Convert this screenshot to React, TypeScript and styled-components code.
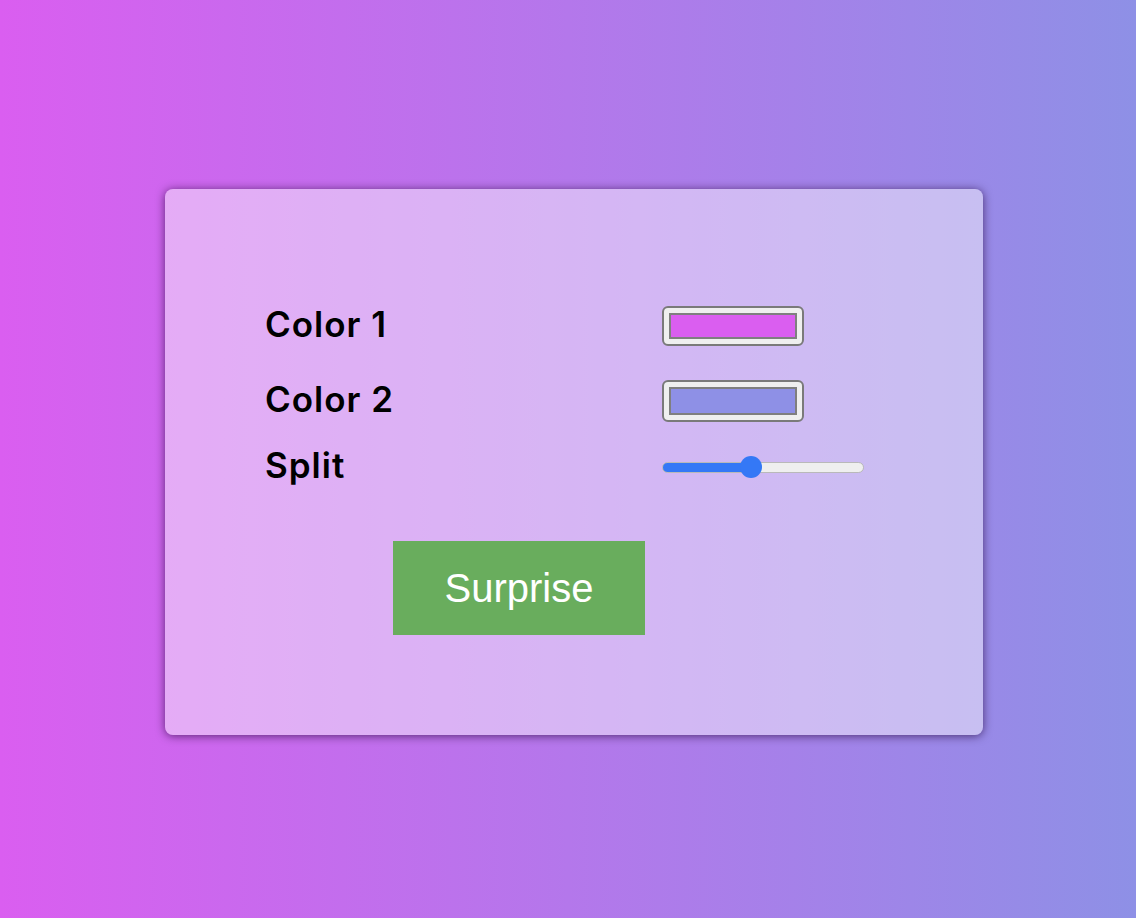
import React, { useState } from "react";
import styled, { createGlobalStyle } from "styled-components";

const GlobalStyle = createGlobalStyle`
  html, body {
    margin: 0;
    padding: 0;
  }
  body {
    font-family: "Inter", "Liberation Sans", sans-serif;
  }
`;

const Page = styled.div<{ $c1: string; $c2: string }>`
  box-sizing: border-box;
  width: 100vw;
  height: 100vh;
  padding: 189px 0 0 165px;
  background: linear-gradient(to right, ${(p) => p.$c1}, ${(p) => p.$c2});
  overflow: hidden;
`;

const Card = styled.div`
  box-sizing: border-box;
  width: 818px;
  height: 546px;
  padding: 117px 0 0 100px;
  border-radius: 8px;
  background: rgba(255, 255, 255, 0.46);
  box-shadow: 0 1px 10px rgba(30, 0, 50, 0.65);
`;

const Form = styled.div`
  display: grid;
  grid-template-columns: 397px auto;
  grid-template-rows: 40px 42px 22px;
  row-gap: 34px;
  align-items: center;
`;

const Label = styled.label`
  font-family: "Inter", sans-serif;
  font-size: 35px;
  line-height: 40px;
  font-weight: 600;
  color: #000;
  letter-spacing: 1px;
  padding-bottom: 5px;
`;

const ColorInput = styled.input<{ $h?: number }>`
  -webkit-appearance: none;
  appearance: none;
  box-sizing: border-box;
  width: 142px;
  height: ${(p) => p.$h ?? 40}px;
  margin: 0;
  padding: 5px;
  border: 2px solid #7a7a7a;
  border-radius: 6px;
  background: #efefef;
  cursor: pointer;

  &::-webkit-color-swatch-wrapper {
    padding: 0;
  }
  &::-webkit-color-swatch {
    border: 2px solid #7f7f7f;
    border-radius: 0;
  }
`;

const Slider = styled.input<{ $pct: number }>`
  -webkit-appearance: none;
  appearance: none;
  width: 202px;
  height: 22px;
  margin: 0;
  background: transparent;
  cursor: pointer;

  &::-webkit-slider-runnable-track {
    box-sizing: border-box;
    height: 11px;
    border-radius: 6px;
    border: 1px solid #b9b9b9;
    background: linear-gradient(
      to right,
      #3478f6 0,
      #3478f6 ${(p) => p.$pct}%,
      #efefef ${(p) => p.$pct}%,
      #efefef 100%
    );
  }
  &::-webkit-slider-thumb {
    -webkit-appearance: none;
    appearance: none;
    width: 22px;
    height: 22px;
    margin-top: -6.5px;
    border-radius: 50%;
    background: #3478f6;
    border: none;
  }
`;

const Button = styled.button`
  display: block;
  width: 252px;
  height: 94px;
  margin: 63px 0 0 128px;
  border: none;
  background: #69ad5d;
  color: #fff;
  font-family: "Liberation Sans", Arial, sans-serif;
  font-size: 40px;
  cursor: pointer;
`;

export default function App() {
  const [c1, setC1] = useState("#da5ef0");
  const [c2, setC2] = useState("#8e90e6");
  const [split, setSplit] = useState(43);

  const surprise = () => {
    const rnd = () =>
      "#" + Math.floor(Math.random() * 0xffffff).toString(16).padStart(6, "0");
    setC1(rnd());
    setC2(rnd());
    setSplit(Math.floor(Math.random() * 100));
  };

  return (
    <>
      <GlobalStyle />
      <Page $c1={c1} $c2={c2}>
        <Card>
          <Form>
            <Label htmlFor="c1">Color 1</Label>
            <ColorInput id="c1" type="color" value={c1} onChange={(e) => setC1(e.target.value)} />
            <Label htmlFor="c2">Color 2</Label>
            <ColorInput id="c2" type="color" $h={42} value={c2} onChange={(e) => setC2(e.target.value)} />
            <Label htmlFor="split">Split</Label>
            <Slider
              id="split"
              type="range"
              min={0}
              max={100}
              value={split}
              $pct={split}
              onChange={(e) => setSplit(Number(e.target.value))}
            />
          </Form>
          <Button onClick={surprise}>Surprise</Button>
        </Card>
      </Page>
    </>
  );
}
